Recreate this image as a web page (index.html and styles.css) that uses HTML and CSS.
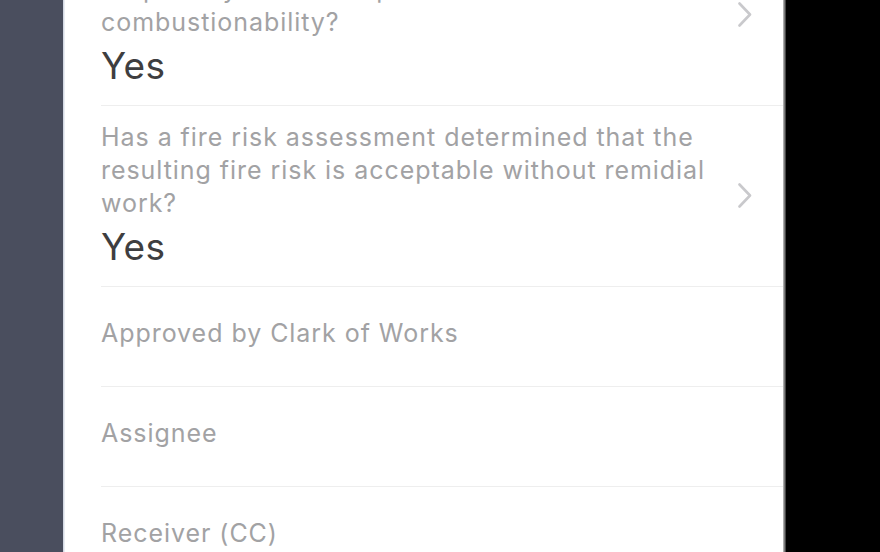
FILE: index.html
```html
<!DOCTYPE html>
<html lang="en">
<head>
<meta charset="utf-8">
<title>Inspection form</title>
<link rel="stylesheet" href="styles.css">
</head>
<body>
<div class="screen">
  <div class="sidebar"></div>
  <div class="sidebar-edge"></div>
  <main class="panel">
    <ul class="list">
      <li class="row row-question">
        <div class="content">
          <p class="question">Have the external wall materials been assessed to quantify their fire spread in terms of their combustionability?</p>
          <p class="answer">Yes</p>
        </div>
        <svg class="chevron" viewBox="0 0 14 25" width="14" height="25" aria-hidden="true"><polyline points="1.5,1.5 12,12.5 1.5,23.5" fill="none" stroke="#c9c9cc" stroke-width="2.6" stroke-linecap="round" stroke-linejoin="round"/></svg>
      </li>
      <li class="row row-question">
        <div class="content">
          <p class="question">Has a fire risk assessment determined that the resulting fire risk is acceptable without remidial work?</p>
          <p class="answer">Yes</p>
        </div>
        <svg class="chevron" viewBox="0 0 14 25" width="14" height="25" aria-hidden="true"><polyline points="1.5,1.5 12,12.5 1.5,23.5" fill="none" stroke="#c9c9cc" stroke-width="2.6" stroke-linecap="round" stroke-linejoin="round"/></svg>
      </li>
      <li class="row row-field"><span class="label">Approved by Clark of Works</span></li>
      <li class="row row-field"><span class="label">Assignee</span></li>
      <li class="row row-field"><span class="label">Receiver (CC)</span></li>
    </ul>
  </main>
  <div class="panel-edge"></div>
  <div class="blackout"></div>
</div>
</body>
</html>
```

FILE: styles.css
```css
* { box-sizing: border-box; }

html, body {
  margin: 0;
  padding: 0;
  height: 100%;
  overflow: hidden;
  background: #000;
}

.screen {
  display: flex;
  height: 552px;
  width: 880px;
  font-family: "Inter", "Open Sans", "Liberation Sans", sans-serif;
}

.sidebar {
  width: 63px;
  flex: none;
  background: #4a4e5e;
}

.sidebar-edge {
  width: 2px;
  flex: none;
  background: linear-gradient(to right, #c9cfdb, #f4f6fa);
}

.panel {
  width: 718px;
  flex: none;
  background: #fff;
  overflow: hidden;
}

.panel-edge {
  width: 3px;
  flex: none;
  background: linear-gradient(to right, #c4c4c4, #7a7a7a, #2a2a2a);
}

.blackout {
  flex: 1;
  background: #000;
}

.list {
  list-style: none;
  margin: -75px 0 0 36px;
  padding: 0;
}

.row {
  border-bottom: 1px solid #eeeeee;
}

.row-question {
  display: flex;
  align-items: center;
  gap: 18px;
  padding: 15px 31px 16px 0;
}

.content {
  flex: 1;
  min-width: 0;
}

.question {
  margin: 0;
  font-size: 25px;
  line-height: 33px;
  letter-spacing: 0.95px;
  color: #a2a2a4;
}

.answer {
  margin: 4px 0 0;
  font-size: 37px;
  line-height: 46px;
  letter-spacing: 0.3px;
  color: #3e3e40;
}

.chevron {
  flex: none;
  display: block;
}

.row-field {
  display: flex;
  align-items: center;
  height: 100px;
  padding-bottom: 8px;
}

.label {
  font-size: 25px;
  letter-spacing: 0.95px;
  color: #a2a2a4;
}
```
